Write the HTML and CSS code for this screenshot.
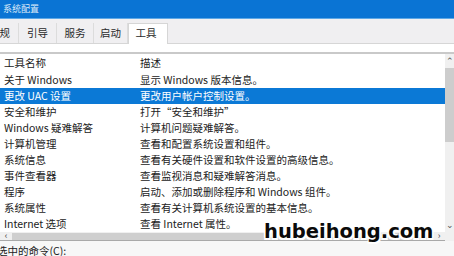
FILE: index.html
```html
<!DOCTYPE html>
<html lang="zh-CN">
<head>
<meta charset="utf-8">
<title>系统配置</title>
<link rel="stylesheet" href="styles.css">
</head>
<body>
<div class="window">
  <div class="titlebar">系统配置</div>
  <div class="tabs">
    <div class="tab tab-first">常规</div>
    <div class="tab">引导</div>
    <div class="tab">服务</div>
    <div class="tab">启动</div>
    <div class="tab active">工具</div>
  </div>
  <div class="panel">
    <div class="list">
      <div class="rows">
        <div class="row head"><span class="c1">工具名称</span><span class="c2">描述</span></div>
        <div class="row"><span class="c1">关于 Windows</span><span class="c2">显示 Windows 版本信息。</span></div>
        <div class="row sel"><span class="c1">更改 UAC 设置</span><span class="c2">更改用户帐户控制设置。</span></div>
        <div class="row"><span class="c1">安全和维护</span><span class="c2">打开“安全和维护”</span></div>
        <div class="row"><span class="c1">Windows 疑难解答</span><span class="c2">计算机问题疑难解答。</span></div>
        <div class="row"><span class="c1">计算机管理</span><span class="c2">查看和配置系统设置和组件。</span></div>
        <div class="row"><span class="c1">系统信息</span><span class="c2">查看有关硬件设置和软件设置的高级信息。</span></div>
        <div class="row"><span class="c1">事件查看器</span><span class="c2">查看监视消息和疑难解答消息。</span></div>
        <div class="row"><span class="c1">程序</span><span class="c2">启动、添加或删除程序和 Windows 组件。</span></div>
        <div class="row"><span class="c1">系统属性</span><span class="c2">查看有关计算机系统设置的基本信息。</span></div>
        <div class="row"><span class="c1">Internet 选项</span><span class="c2">查看 Internet 属性。</span></div>
      </div>
      <div class="vscroll">
        <div class="arrow up">&#8963;</div>
        <div class="vthumb"></div>
        <div class="vtrack"></div>
        <div class="arrow down">&#8964;</div>
      </div>
    </div>
    <div class="hscroll">
      <div class="harrow">&lsaquo;</div>
      <div class="hthumb"></div>
      <div class="harrow">&rsaquo;</div>
      <div class="corner"></div>
    </div>
    <div class="cmd">选中的命令(C):</div>
  </div>
  <div class="watermark">hubeihong.com</div>
</div>
</body>
</html>
```

FILE: styles.css
```css
* { box-sizing: border-box; }
html, body {
  margin: 0;
  padding: 0;
}
body {
  width: 454px;
  height: 256px;
  overflow: hidden;
  background: #f4f4f4;
  font-family: "Noto Sans CJK SC", "Noto Sans", sans-serif;
  font-size: 10.5px;
  color: #222222;
}
.window {
  position: relative;
  width: 454px;
  height: 256px;
  overflow: hidden;
}
.titlebar {
  height: 19px;
  background: #0a74d4;
  border-bottom: 1px solid #5ea8e6;
  color: #dbeaf8;
  font-size: 9px;
  line-height: 17px;
  padding-left: 3px;
}
.tabs {
  height: 25px;
  display: flex;
  align-items: flex-end;
  background: #f0eff1;
  border-bottom: 1px solid #d6d6d6;
}
.tab {
  height: 20px;
  display: flex;
  align-items: center;
  justify-content: center;
  border-right: 1px solid #dcdcdc;
  color: #2a2a2a;
  width: 37px;
  padding-bottom: 2px;
}
.tab-first {
  margin-left: -19px;
  width: 38px;
}
.tab:nth-child(2) { width: 38px; }
.tab:nth-child(4) { width: 34px; }
.tab.active {
  width: 40px;
  height: 21px;
  background: #ffffff;
  border: 1px solid #d6d6d6;
  border-bottom: none;
  margin-bottom: -1px;
  padding-bottom: 4px;
  padding-right: 4px;
}
.panel {
  background: #ffffff;
  padding-top: 8px;
}
.list {
  display: flex;
  border-top: 2px solid #c9c9c9;
  height: 180px;
}
.rows {
  width: 445px;
}
.row {
  display: flex;
  height: 16px;
  line-height: 16px;
  padding-left: 4px;
  white-space: nowrap;
}
.row.head {
  height: 18px;
  line-height: 18px;
}
.c1 { width: 136px; }
.c2 { flex: 1; }
.row.sel {
  background: #0b79d6;
  color: #ffffff;
}
.vscroll {
  width: 9px;
  display: flex;
  flex-direction: column;
  background: #f0f0f0;
}
.arrow {
  height: 14px;
  font-size: 9px;
  line-height: 14px;
  color: #555;
  text-align: center;
}
.vthumb {
  height: 74px;
  background: #cdcdcd;
}
.vtrack { flex: 1; }
.hscroll {
  height: 9px;
  display: flex;
  align-items: center;
  background: #f0f0f0;
  border-bottom: 1px solid #a9a9a9;
}
.harrow {
  width: 12px;
  height: 9px;
  font-size: 9px;
  line-height: 8px;
  text-align: center;
  color: #444;
}
.hthumb {
  flex: 1;
  height: 7px;
  background: #cfcfcf;
}
.corner {
  width: 9px;
  height: 9px;
  background: #f0f0f0;
}
.cmd {
  background: #f7f7f7;
  height: 15px;
  line-height: 20px;
  margin-left: -3px;
  color: #222;
}
.watermark {
  position: absolute;
  left: 264px;
  top: 220px;
  font-family: "DejaVu Sans", sans-serif;
  font-weight: bold;
  font-size: 19.5px;
  line-height: 24px;
  color: #0a0a0a;
  -webkit-text-stroke: 1.2px #0a0a0a;
  paint-order: stroke fill;
  text-shadow: 1.5px 1.5px 0 #fff, -1.5px -1.5px 0 #fff, 1.5px -1.5px 0 #fff, -1.5px 1.5px 0 #fff;
}
```
